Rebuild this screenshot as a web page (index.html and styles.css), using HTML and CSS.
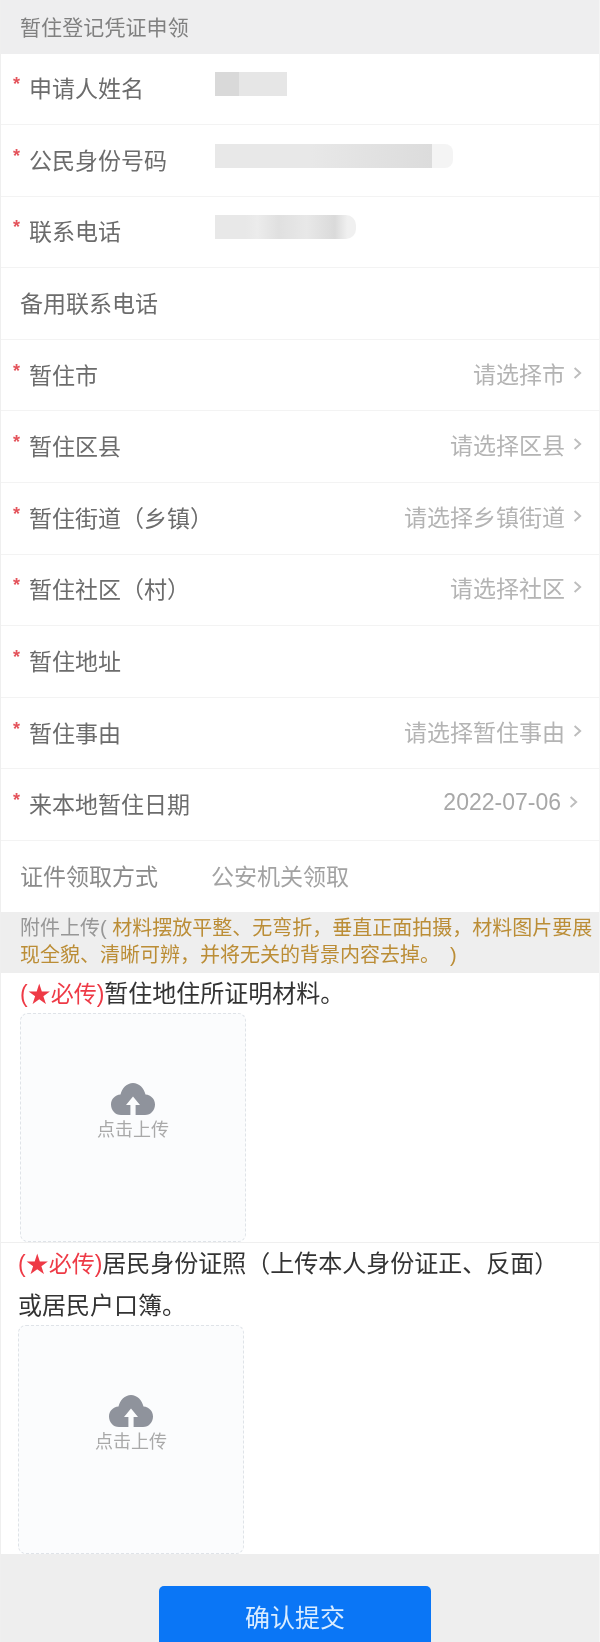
FILE: index.html
```html
<!DOCTYPE html>
<html lang="zh-CN">
<head>
<meta charset="utf-8">
<title>暂住登记凭证申领</title>
<link rel="stylesheet" href="styles.css">
</head>
<body>
<svg class="defs" width="0" height="0" aria-hidden="true">
  <symbol id="chev" viewBox="0 0 9 12"><path d="M1.6 1 L7.2 6 L1.6 11" fill="none" stroke="#bdbdbd" stroke-width="1.9"/></symbol>
  <symbol id="cloud" viewBox="0 0 44 32"><path fill-rule="evenodd" d="M10 32 C4 32 0 27 0 21.5 C0 16 4 12 9.5 11.5 C11 5 16 0 22 0 C28 0 33 5 34.5 11.5 C40 12 44 16 44 21.5 C44 27 40 32 34 32 L24.6 32 L24.6 22 L29 22 L22 13.5 L15 22 L19.4 22 L19.4 32 Z" fill="#8f939c"/></symbol>
</svg>
<main class="page">
  <h1 class="section-title">暂住登记凭证申领</h1>
  <div class="row"><span class="req">*</span><span class="label label-fixed">申请人姓名</span><div class="mask mask-name"></div></div>
  <div class="row"><span class="req">*</span><span class="label label-fixed">公民身份号码</span><div class="mask mask-id"></div></div>
  <div class="row"><span class="req">*</span><span class="label label-fixed">联系电话</span><div class="mask mask-phone"></div></div>
  <div class="row plain"><span class="label">备用联系电话</span></div>
  <div class="row"><span class="req">*</span><span class="label">暂住市</span><span class="value">请选择市</span><svg class="chev"><use href="#chev"/></svg></div>
  <div class="row"><span class="req">*</span><span class="label">暂住区县</span><span class="value">请选择区县</span><svg class="chev"><use href="#chev"/></svg></div>
  <div class="row"><span class="req">*</span><span class="label">暂住街道（乡镇）</span><span class="value">请选择乡镇街道</span><svg class="chev"><use href="#chev"/></svg></div>
  <div class="row"><span class="req">*</span><span class="label">暂住社区（村）</span><span class="value">请选择社区</span><svg class="chev"><use href="#chev"/></svg></div>
  <div class="row"><span class="req">*</span><span class="label">暂住地址</span></div>
  <div class="row"><span class="req">*</span><span class="label">暂住事由</span><span class="value">请选择暂住事由</span><svg class="chev"><use href="#chev"/></svg></div>
  <div class="row row-date"><span class="req">*</span><span class="label">来本地暂住日期</span><span class="value">2022-07-06</span><svg class="chev"><use href="#chev"/></svg></div>
  <div class="row plain row-last"><span class="label label-soft">证件领取方式</span><span class="static">公安机关领取</span></div>

  <div class="notice"><span class="notice-head">附件上传(</span> 材料摆放平整、无弯折，垂直正面拍摄，材料图片要展现全貌、清晰可辨，并将无关的背景内容去掉。&ensp;)</div>

  <section class="upload upload-first">
    <p class="upload-title"><span class="must">(★必传)</span>暂住地住所证明材料。</p>
    <div class="drop"><svg class="cloud"><use href="#cloud"/></svg><span class="drop-text">点击上传</span></div>
  </section>
  <section class="upload upload-second">
    <p class="upload-title"><span class="must">(★必传)</span>居民身份证照（上传本人身份证正、反面）<br>或居民户口簿。</p>
    <div class="drop"><svg class="cloud"><use href="#cloud"/></svg><span class="drop-text">点击上传</span></div>
  </section>

  <footer class="footer"><button class="submit" type="button">确认提交</button></footer>
</main>
</body>
</html>
```
FILE: styles.css
```css
* { box-sizing: border-box; }
html, body { margin: 0; padding: 0; }
body {
  width: 600px;
  height: 1642px;
  overflow: hidden;
  background: #fff;
  font-family: "Liberation Sans", "Noto Sans CJK SC", sans-serif;
}
.defs { position: absolute; }
.page {
  display: flex;
  flex-direction: column;
  height: 1642px;
  overflow: hidden;
  background: #fff;
  border-left: 1px solid #efefef;
  border-right: 1px solid #f4f4f4;
  filter: blur(0.55px);
}
.section-title {
  flex: none;
  margin: 0;
  height: 53.5px;
  padding: 0 0 2px 19px;
  display: flex;
  align-items: center;
  background: #eeeeef;
  color: #808080;
  font-size: 21px;
  font-weight: 400;
  letter-spacing: .1px;
}
.row {
  height: 71.6px;
  flex: none;
  display: flex;
  align-items: center;
  padding: 0 17px 3px 12px;
  border-bottom: 1px solid #f3f3f3;
}
.row.plain { padding-left: 19px; }
.row-date { padding-right: 21px; }
.row-last { height: 70.6px; border-bottom: 0; }
.req {
  width: 16px;
  flex: none;
  margin-bottom: 6px;
  color: #e4545c;
  font-size: 18px;
  line-height: 20px;
  font-weight: 700;
}
.label { color: #6c6c6c; font-size: 23px; white-space: nowrap; }
.label-fixed { width: 186px; flex: none; }
.label-soft { color: #8a8a8a; }
.value {
  margin-left: auto;
  margin-bottom: 2px;
  color: #b4b4b4;
  font-size: 23px;
  white-space: nowrap;
}
.row-date .value { color: #a8a8a8; }
.chev { width: 9px; height: 12px; margin-left: 8px; margin-bottom: 2px; flex: none; }
.static { margin-left: 53px; color: #a2a2a2; font-size: 23px; }
.mask {
  height: 24px;
  margin-bottom: 6px;
}
.mask-name {
  width: 72px;
  background: linear-gradient(90deg, #d9d9d9 0 33%, #e6e6e6 33% 100%);
}
.mask-id {
  width: 238px;
  background: linear-gradient(90deg, #e8e8e8 0 40%, #e3e3e3 60%, #dcdcdc 91%, #f4f4f4 91% 100%);
  border-radius: 0 8px 8px 0;
}
.mask-phone {
  width: 141px;
  background: linear-gradient(90deg, #e8e8e8 0 22%, #ececec 30%, #e0e0e0 45%, #e8e8e8 65%, #dadada 85%, #f0f0f0 94%);
  border-radius: 0 10px 10px 0;
}
.notice {
  height: 61px;
  flex: none;
  padding: 3px 0 0 19px;
  background: #eeeeee;
  color: #bb8d36;
  font-size: 20px;
  line-height: 27.5px;
  overflow: hidden;
}
.notice-head { color: #979797; }
.upload-first { height: 270px; padding: 0 0 0 19px; border-bottom: 1px solid #efefef; flex: none; }
.upload-second { height: 311px; padding: 0 0 0 17px; flex: none; }
.upload-title {
  margin: 0 0 -2px;
  color: #333;
  font-size: 24px;
  line-height: 42px;
}
.must { color: #ee3a46; font-size: 23px; }
.drop {
  width: 226px;
  height: 229px;
  padding-top: 69px;
  display: flex;
  flex-direction: column;
  align-items: center;
  background: #fbfcfd;
  border: 1px dashed #dfe3e8;
  border-radius: 8px;
}
.cloud { width: 44px; height: 32px; flex: none; }
.drop-text { margin-top: 0; color: #a9a9a9; font-size: 18px; line-height: 30px; }
.footer {
  flex: 1;
  display: flex;
  justify-content: center;
  align-items: flex-start;
  padding: 32px 10px 0 0;
  background: #eeeeee;
}
.submit {
  width: 272px;
  height: 70px;
  padding: 0 0 10px;
  border: 0;
  border-radius: 5px 5px 0 0;
  background: #0a76f6;
  color: #d9ecff;
  font-family: inherit;
  font-size: 25px;
  flex: none;
}
```
